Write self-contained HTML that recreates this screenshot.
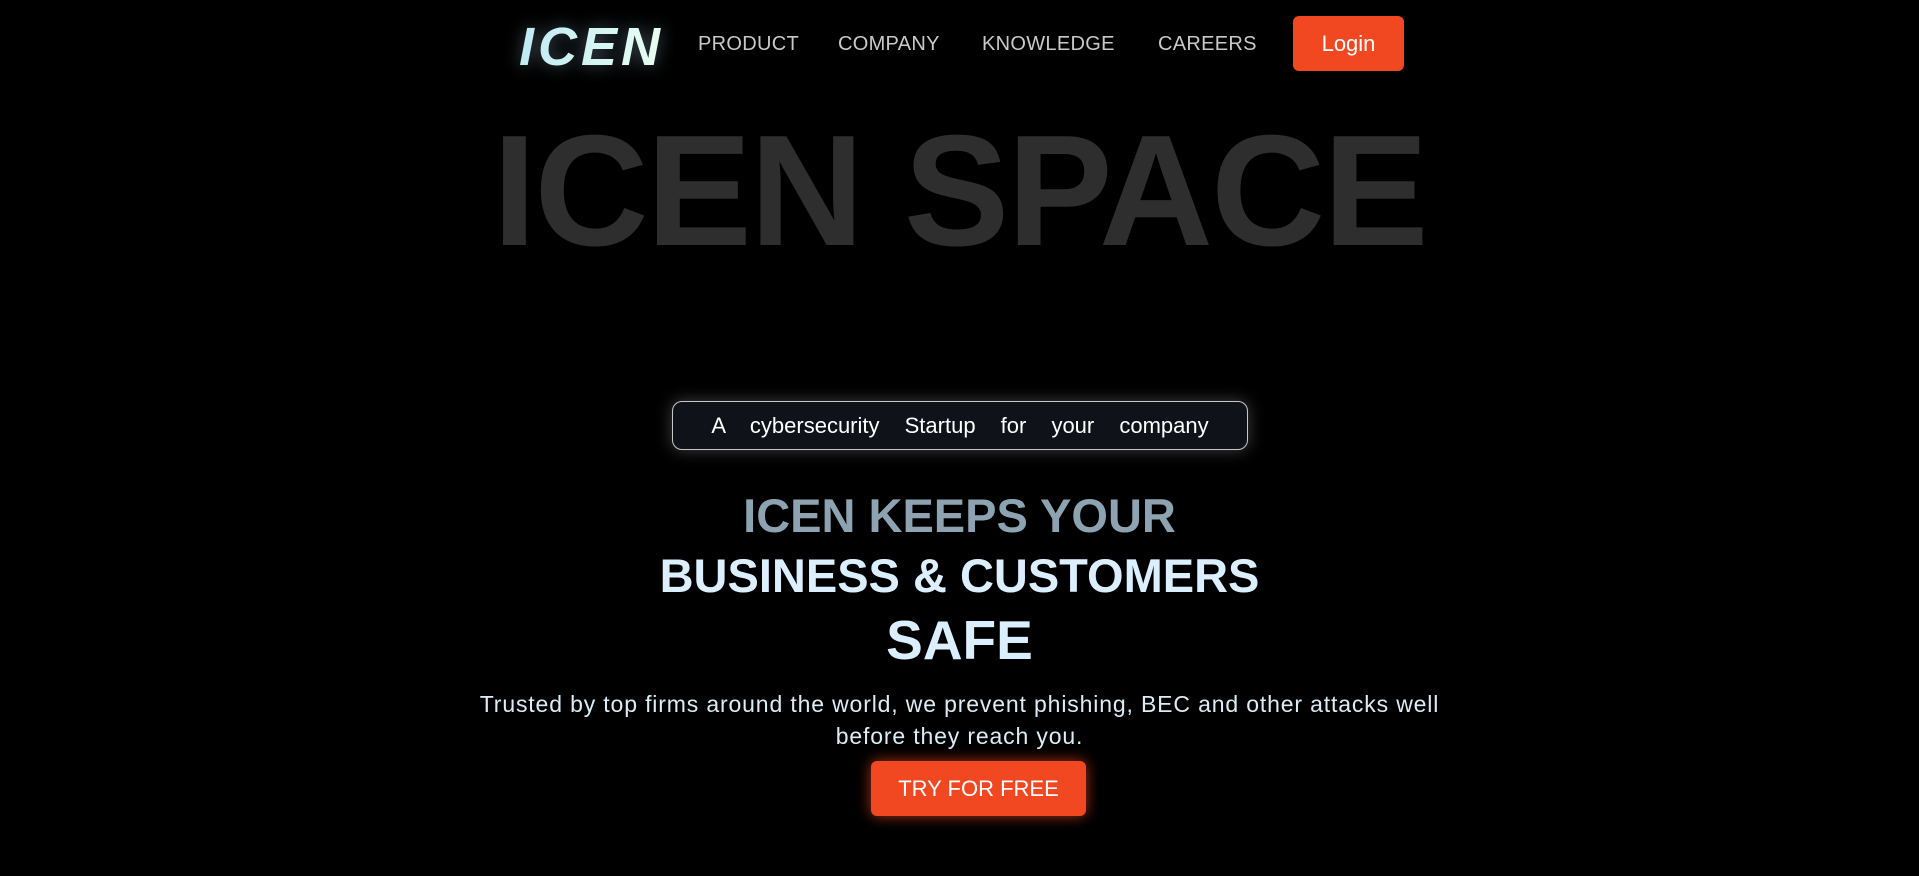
<!DOCTYPE html>
<html><head><meta charset="utf-8"><style>
*{margin:0;padding:0;box-sizing:border-box}
html,body{width:1919px;height:876px;background:#000;overflow:hidden;font-family:"Liberation Sans",sans-serif}
.abs{position:absolute}
.logo{left:519px;top:16px;font-size:54px;font-weight:bold;font-style:italic;letter-spacing:4px;background:linear-gradient(90deg,#bfeaf5,#e8fff0);-webkit-background-clip:text;color:transparent;filter:drop-shadow(0 0 8px rgba(190,230,255,.35))}
.nav{top:33px;font-size:20px;color:#c9c9c9;letter-spacing:.3px}
.login{left:1293px;top:16px;width:111px;height:55px;background:#f24822;border-radius:6px;color:#fff;font-size:22px;text-align:center;line-height:55px}
.big{left:0;width:1919px;top:112px;text-align:center;font-size:158px;font-weight:bold;color:#2e2e2e;line-height:158px}
.big span{display:inline-block;transform:scaleX(1.0);letter-spacing:-2px}
.badge{left:672px;top:401px;width:576px;height:49px;background:#10121a;border:1px solid #c8c8c8;border-radius:10px;box-shadow:0 0 16px rgba(255,255,255,.25);color:#fff;font-size:22px;text-align:center;line-height:47px;word-spacing:19px}
.h{left:0;width:1919px;text-align:center;font-weight:bold}
.btn{left:871px;top:761px;width:215px;height:55px;background:#f24822;border-radius:6px;color:#fff;font-size:22px;text-align:center;line-height:55px;box-shadow:0 0 14px rgba(242,72,34,.7)}
</style></head><body>
<div class="abs logo">ICEN</div>
<div class="abs nav" style="left:698px">PRODUCT</div>
<div class="abs nav" style="left:838px">COMPANY</div>
<div class="abs nav" style="left:982px">KNOWLEDGE</div>
<div class="abs nav" style="left:1158px">CAREERS</div>
<div class="abs login">Login</div>
<div class="abs big"><span>ICEN SPACE</span></div>
<div class="abs badge">A cybersecurity Startup for your company</div>
<div class="abs h" style="top:488px;font-size:47px;line-height:56px;color:#8ea3b1">ICEN KEEPS YOUR</div>
<div class="abs h" style="top:548px;font-size:47px;line-height:56px;color:#dcefff">BUSINESS &amp; CUSTOMERS</div>
<div class="abs h" style="top:607px;font-size:55px;line-height:66px;color:#dcefff">SAFE</div>
<div class="abs h" style="top:688px;font-size:23px;line-height:32px;font-weight:normal;letter-spacing:.85px;color:#dcecf6">Trusted by top firms around the world, we prevent phishing, BEC and other attacks well<br>before they reach you.</div>
<div class="abs btn">TRY FOR FREE</div>
</body></html>
